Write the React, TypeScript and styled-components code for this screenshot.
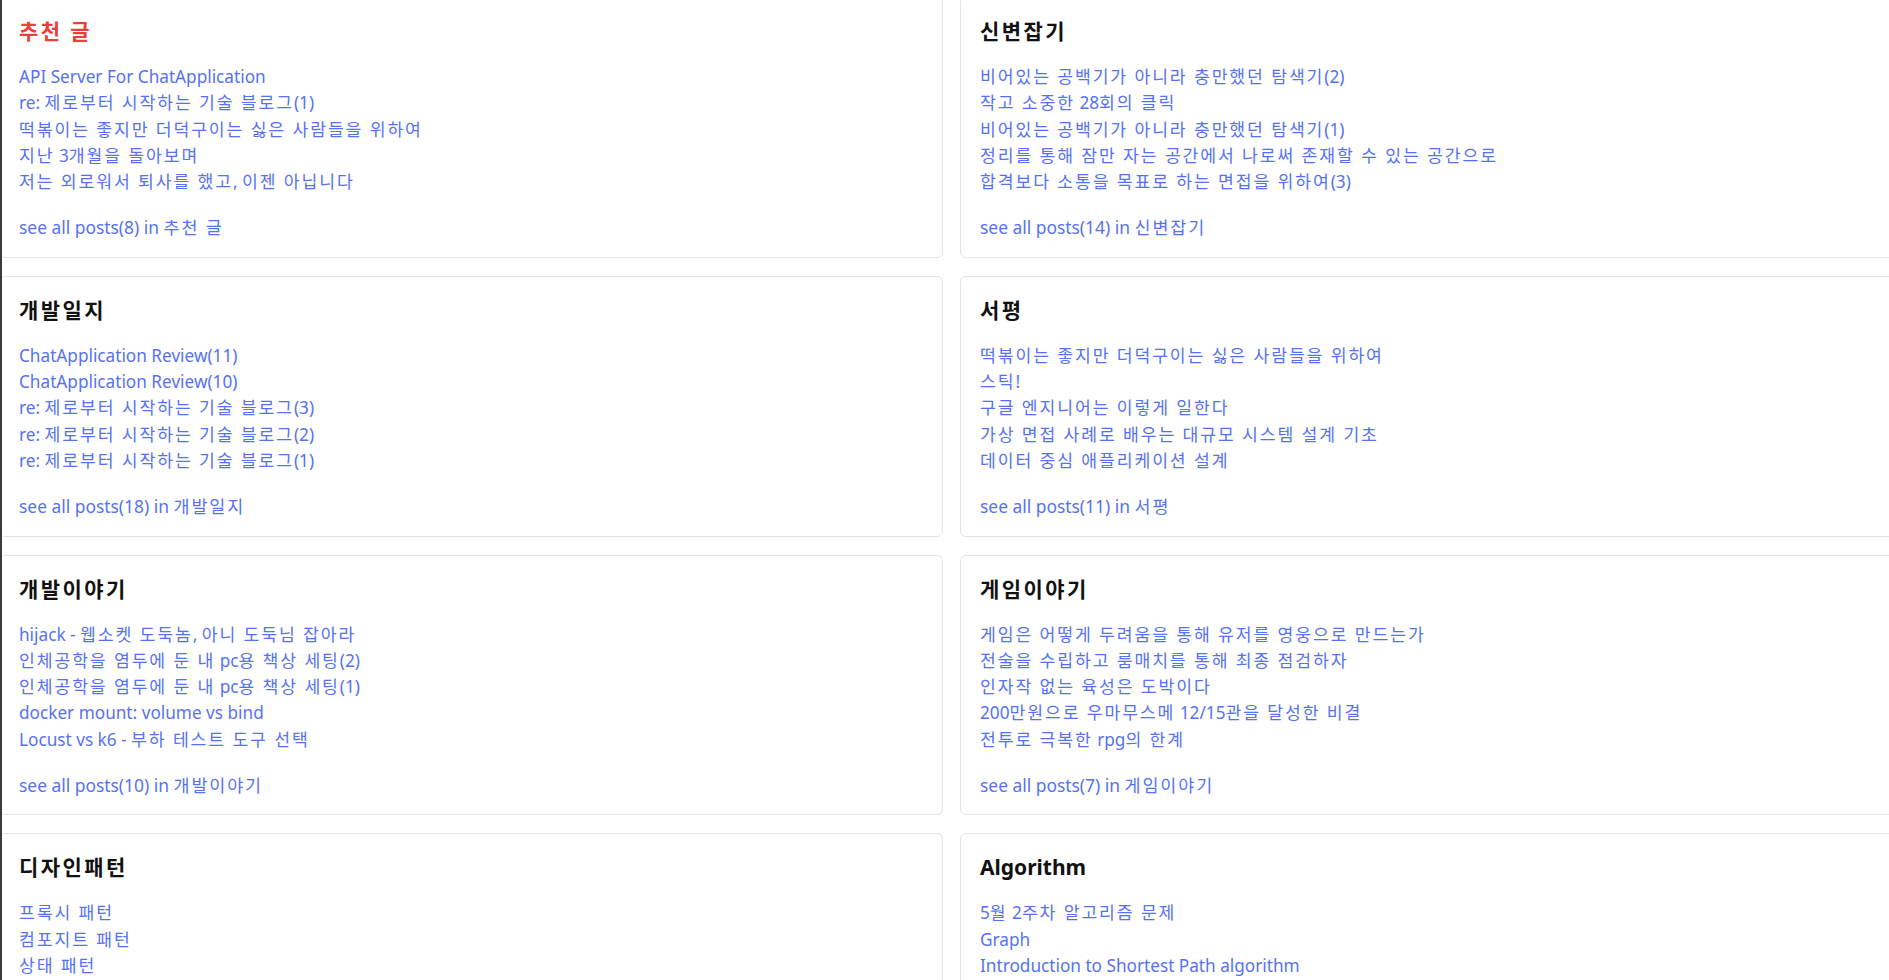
import React from "react";
import styled, { createGlobalStyle } from "styled-components";

const GlobalStyle = createGlobalStyle`
  html, body {
    margin: 0;
    padding: 0;
    background: #ffffff;
    overflow: hidden;
  }
  body {
    font-family: "Noto Sans", "Noto Sans CJK KR", sans-serif;
    -webkit-font-smoothing: antialiased;
  }
`;

const WindowEdge = styled.div`
  position: fixed;
  left: 0;
  top: 0;
  bottom: 0;
  width: 2px;
  background: #3a3a3a;
  z-index: 2;
`;

const Grid = styled.main`
  display: grid;
  grid-template-columns: 944px 944px;
  column-gap: 17px;
  row-gap: 18px;
  margin: -3px 0 0 -1px;
`;

const Card = styled.section`
  box-sizing: border-box;
  border: 1px solid #e4e4e7;
  border-radius: 6px;
  padding: 18px 19px 16px;
  background: #ffffff;
`;

const Title = styled.h2<{ $accent?: boolean }>`
  margin: 0;
  font-size: 21px;
  line-height: 30px;
  font-weight: 700;
  color: ${(p) => (p.$accent ? "#e8403a" : "#111111")};
  --hangul-spacing: 2.4px;
`;

const PostList = styled.ul`
  list-style: none;
  margin: 18px 0 0;
  padding: 0;
`;

const PostItem = styled.li`
  font-size: 17.2px;
  line-height: 26.3px;
  --hangul-spacing: 1.9px;
`;

const PostLink = styled.a`
  color: #5672f4;
  text-decoration: none;
  cursor: pointer;
`;

const SeeAll = styled.a`
  display: block;
  margin-top: 19px;
  font-size: 17.4px;
  line-height: 26.3px;
  color: #5672f4;
  text-decoration: none;
  cursor: pointer;
  --hangul-spacing: 1.9px;
`;

const HangulRun = styled.span`
  letter-spacing: var(--hangul-spacing, 0px);
`;

const HANGUL_RUN = /([\uAC00-\uD7A3\u3131-\u318E]+(?:\s+[\uAC00-\uD7A3\u3131-\u318E]+)*)/;

function Text({ children }: { children: string }) {
  const parts = children.split(HANGUL_RUN);
  return (
    <>
      {parts.map((part, i) =>
        i % 2 === 1 ? <HangulRun key={i}>{part}</HangulRun> : part
      )}
    </>
  );
}

type Category = {
  name: string;
  count: number;
  accent?: boolean;
  posts: string[];
};

const categories: Category[] = [
  {
    name: "추천 글",
    count: 8,
    accent: true,
    posts: [
      "API Server For ChatApplication",
      "re: 제로부터 시작하는 기술 블로그(1)",
      "떡볶이는 좋지만 더덕구이는 싫은 사람들을 위하여",
      "지난 3개월을 돌아보며",
      "저는 외로워서 퇴사를 했고, 이젠 아닙니다",
    ],
  },
  {
    name: "신변잡기",
    count: 14,
    posts: [
      "비어있는 공백기가 아니라 충만했던 탐색기(2)",
      "작고 소중한 28회의 클릭",
      "비어있는 공백기가 아니라 충만했던 탐색기(1)",
      "정리를 통해 잠만 자는 공간에서 나로써 존재할 수 있는 공간으로",
      "합격보다 소통을 목표로 하는 면접을 위하여(3)",
    ],
  },
  {
    name: "개발일지",
    count: 18,
    posts: [
      "ChatApplication Review(11)",
      "ChatApplication Review(10)",
      "re: 제로부터 시작하는 기술 블로그(3)",
      "re: 제로부터 시작하는 기술 블로그(2)",
      "re: 제로부터 시작하는 기술 블로그(1)",
    ],
  },
  {
    name: "서평",
    count: 11,
    posts: [
      "떡볶이는 좋지만 더덕구이는 싫은 사람들을 위하여",
      "스틱!",
      "구글 엔지니어는 이렇게 일한다",
      "가상 면접 사례로 배우는 대규모 시스템 설계 기초",
      "데이터 중심 애플리케이션 설계",
    ],
  },
  {
    name: "개발이야기",
    count: 10,
    posts: [
      "hijack - 웹소켓 도둑놈, 아니 도둑님 잡아라",
      "인체공학을 염두에 둔 내 pc용 책상 세팅(2)",
      "인체공학을 염두에 둔 내 pc용 책상 세팅(1)",
      "docker mount: volume vs bind",
      "Locust vs k6 - 부하 테스트 도구 선택",
    ],
  },
  {
    name: "게임이야기",
    count: 7,
    posts: [
      "게임은 어떻게 두려움을 통해 유저를 영웅으로 만드는가",
      "전술을 수립하고 룸매치를 통해 최종 점검하자",
      "인자작 없는 육성은 도박이다",
      "200만원으로 우마무스메 12/15관을 달성한 비결",
      "전투로 극복한 rpg의 한계",
    ],
  },
  {
    name: "디자인패턴",
    count: 3,
    posts: ["프록시 패턴", "컴포지트 패턴", "상태 패턴"],
  },
  {
    name: "Algorithm",
    count: 3,
    posts: [
      "5월 2주차 알고리즘 문제",
      "Graph",
      "Introduction to Shortest Path algorithm",
    ],
  },
];

export default function App() {
  return (
    <>
      <GlobalStyle />
      <WindowEdge />
      <Grid>
        {categories.map((c) => (
          <Card key={c.name}>
            <Title $accent={c.accent}>
              <Text>{c.name}</Text>
            </Title>
            <PostList>
              {c.posts.map((p, i) => (
                <PostItem key={i}>
                  <PostLink>
                    <Text>{p}</Text>
                  </PostLink>
                </PostItem>
              ))}
            </PostList>
            <SeeAll>
              <Text>{`see all posts(${c.count}) in ${c.name}`}</Text>
            </SeeAll>
          </Card>
        ))}
      </Grid>
    </>
  );
}
